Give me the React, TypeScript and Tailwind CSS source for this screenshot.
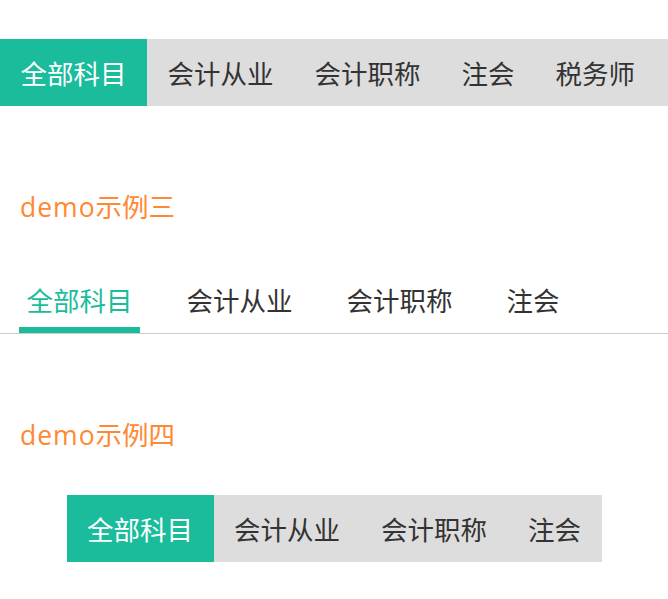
import React from "react";

const font = { fontFamily: '"Noto Sans CJK SC", "Noto Sans", sans-serif' };
const headingFont = { fontFamily: '"Open Sans", "Noto Sans CJK SC", sans-serif' };

const tabsA = ["全部科目", "会计从业", "会计职称", "注会", "税务师"];
const tabsB = ["全部科目", "会计从业", "会计职称", "注会"];

function BlockTabs({ items, className }: { items: string[]; className?: string }) {
  return (
    <div className={"flex h-[67px] bg-[#dddddd] " + (className ?? "")}>
      {items.map((t, i) => (
        <div
          key={t}
          className={
            "flex items-center px-[20.5px] text-[26.5px] " +
            (i === 0 ? "bg-[#1abc9c] text-white" : "text-[#333333]")
          }
        >
          {t}
        </div>
      ))}
    </div>
  );
}

function DemoTitle({ label }: { label: string }) {
  return (
    <h3
      className="pl-[20px] text-[26.5px] leading-[40px] font-normal text-[#ff8833]"
      style={headingFont}
    >
      <span className="tracking-[1px]">demo</span>
      {label}
    </h3>
  );
}

export default function App() {
  return (
    <div className="w-[668px] bg-white pt-[39px]" style={font}>
      <BlockTabs items={tabsA} className="w-full" />

      {/* demo 3 */}
      <div className="mt-[81px]">
        <DemoTitle label="示例三" />
      </div>
      <div className="mt-[53px] flex gap-[39px] border-b border-[#cccccc] pl-[19px]">
        {tabsB.map((t, i) => (
          <div
            key={t}
            className={
              "px-[7.5px] pb-[7px] text-[26.5px] leading-[40px] border-b-[6px] " +
              (i === 0 ? "border-[#1abc9c] text-[#1abc9c]" : "border-transparent text-[#333333]")
            }
          >
            {t}
          </div>
        ))}
      </div>

      {/* demo 4 */}
      <div className="mt-[81px]">
        <DemoTitle label="示例四" />
      </div>
      <div className="mt-[40px] flex justify-center pb-[37px]">
        <BlockTabs items={tabsB} />
      </div>
    </div>
  );
}
